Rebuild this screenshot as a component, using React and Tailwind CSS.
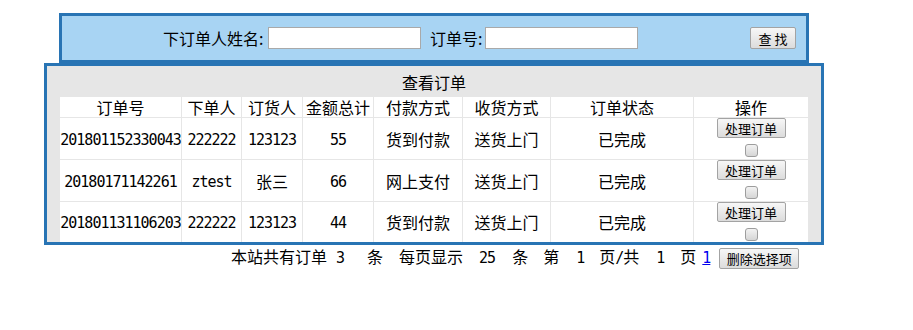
import React from 'react'

const orders = [
  { id: '201801152330043', buyer: '222222', receiver: '123123', total: '55', pay: '货到付款', ship: '送货上门', status: '已完成', h: 'h-[41px]' },
  { id: '20180171142261', buyer: 'ztest', receiver: '张三', total: '66', pay: '网上支付', ship: '送货上门', status: '已完成', h: 'h-[41px]' },
  { id: '201801131106203', buyer: '222222', receiver: '123123', total: '44', pay: '货到付款', ship: '送货上门', status: '已完成', h: 'h-[40px]' },
]

const headers = ['订单号', '下单人', '订货人', '金额总计', '付款方式', '收货方式', '订单状态', '操作']

// 半角字符用等宽字体压到 8px 一格，接近宋体
const mono = "font-['DejaVu_Sans_Mono',monospace] text-[15px] tracking-[-1px]"

function M({ children, className = '' }) {
  return <span className={mono + ' ' + className}>{children}</span>
}

function Btn({ children, className = '' }) {
  return (
    <button
      className={
        'rounded-[2px] border border-[#a3a3a3] bg-gradient-to-b from-[#f7f7f7] to-[#dcdcdc] text-[13px] leading-none text-black ' +
        className
      }
    >
      {children}
    </button>
  )
}

function Cell({ children, className = '' }) {
  return (
    <div className={'flex items-center justify-center bg-white whitespace-nowrap ' + className}>
      <div>{children}</div>
    </div>
  )
}

export default function App() {
  return (
    <div className="min-h-[330px] bg-white pt-[13px] pl-[44px] font-['Noto_Sans_CJK_SC',sans-serif] text-[16px] text-black">
      {/* 查询条件 */}
      <div className="ml-[15px] flex h-[50px] w-[750px] items-center border-[3px] border-[#2874b4] bg-[#a8d4f3]">
        <span className="ml-[101px] w-[105px]">下订单人姓名:</span>
        <input className="h-[22px] w-[153px] border border-[#a9a9a9] bg-white" />
        <span className="ml-[9px] w-[55px]">订单号:</span>
        <input className="h-[22px] w-[153px] border border-[#a9a9a9] bg-white" />
        <Btn className="ml-auto mr-[10px] h-[22px] w-[46px]">查 找</Btn>
      </div>

      {/* 订单列表 */}
      <div className="w-[780px] border-[3px] border-[#2874b4] bg-[#e6e6e6] px-[13px]">
        <div className="flex h-[31px] items-center justify-center">查看订单</div>
        <div className="grid grid-cols-[121px_59px_60px_70px_88px_87px_142px_114px] gap-px bg-[#e6e6e6]">
          {headers.map((h) => (
            <Cell key={h} className="h-[20px]">
              {h}
            </Cell>
          ))}
          {orders.map((o) => (
            <React.Fragment key={o.id}>
              <Cell className={o.h}><M>{o.id}</M></Cell>
              <Cell className={o.h}><M>{o.buyer}</M></Cell>
              <Cell className={o.h}>{o.receiver === '张三' ? o.receiver : <M>{o.receiver}</M>}</Cell>
              <Cell className={o.h}><M>{o.total}</M></Cell>
              <Cell className={o.h}>{o.pay}</Cell>
              <Cell className={o.h}>{o.ship}</Cell>
              <Cell className={o.h}>{o.status}</Cell>
              <div className={'flex flex-col items-center bg-white ' + o.h}>
                <Btn className="h-[20px] w-[69px]">处理订单</Btn>
                <input
                  type="checkbox"
                  className="m-0 mt-[6px] h-[13px] w-[13px] appearance-none rounded-[3px] border border-[#9d9d9d] bg-gradient-to-b from-[#f2f2f2] to-[#d6d6d6]"
                />
              </div>
            </React.Fragment>
          ))}
        </div>
      </div>

      {/* 分页 */}
      <div className="h-[23px] whitespace-nowrap pl-[187px] leading-[23px]">
        <span>本站共有订单</span>
        <M className="ml-[9px]">3</M>
        <span className="ml-[23px]">条</span>
        <span className="ml-[16px]">每页显示</span>
        <M className="ml-[16px]">25</M>
        <span className="ml-[17px]">条</span>
        <span className="ml-[15px]">第</span>
        <M className="ml-[17px]">1</M>
        <span className="ml-[15px]">页</span>
        <M>/</M>
        <span>共</span>
        <M className="ml-[17px]">1</M>
        <span className="ml-[16px]">页</span>
        <a href="#" className={'ml-[6px] text-[#0000ee] underline ' + mono}>1</a>
        <Btn className="ml-[9px] h-[21px] w-[80px] align-middle">删除选择项</Btn>
      </div>
    </div>
  )
}
